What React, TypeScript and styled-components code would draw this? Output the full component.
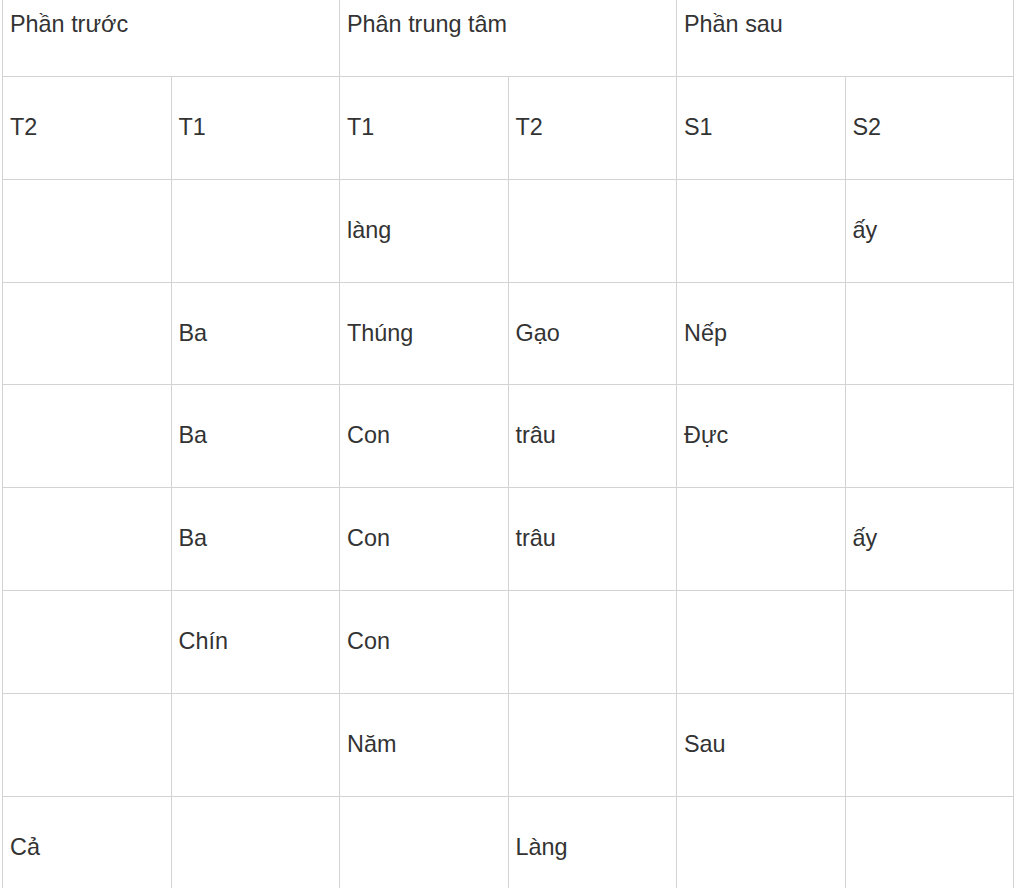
import React from "react";
import styled, { createGlobalStyle } from "styled-components";

const Global = createGlobalStyle`
  html, body { margin: 0; padding: 0; background: #ffffff; }
  body { font-family: "Liberation Sans", Arial, sans-serif; overflow: hidden; }
`;

const Grid = styled.div`
  display: grid;
  grid-template-columns: repeat(6, 1fr);
  grid-auto-rows: 102.86px;
  width: 1012px;
  margin: -27px 0 0 2px;
  border-left: 1px solid #d3d3d3;
  border-top: 1px solid #d3d3d3;
  box-sizing: border-box;
`;

const Cell = styled.div<{ $span?: number }>`
  grid-column: span ${(p) => p.$span ?? 1};
  display: flex;
  align-items: center;
  padding: 0 0 1px 7px;
  border-right: 1px solid #d3d3d3;
  border-bottom: 1px solid #d3d3d3;
  box-sizing: border-box;
  font-size: 23.4px;
  color: #333333;
  white-space: nowrap;
`;

const header = ["Phần trước", "Phân trung tâm", "Phần sau"];
const sub = ["T2", "T1", "T1", "T2", "S1", "S2"];
const rows: string[][] = [
  ["", "", "làng", "", "", "ấy"],
  ["", "Ba", "Thúng", "Gạo", "Nếp", ""],
  ["", "Ba", "Con", "trâu", "Đực", ""],
  ["", "Ba", "Con", "trâu", "", "ấy"],
  ["", "Chín", "Con", "", "", ""],
  ["", "", "Năm", "", "Sau", ""],
  ["Cả", "", "", "Làng", "", ""],
];

export default function App() {
  return (
    <>
      <Global />
      <Grid>
        {header.map((h) => (
          <Cell key={h} $span={2}>
            {h}
          </Cell>
        ))}
        {sub.map((s, i) => (
          <Cell key={"s" + i}>{s}</Cell>
        ))}
        {rows.map((r, ri) =>
          r.map((c, ci) => <Cell key={ri + "-" + ci}>{c}</Cell>)
        )}
      </Grid>
    </>
  );
}
